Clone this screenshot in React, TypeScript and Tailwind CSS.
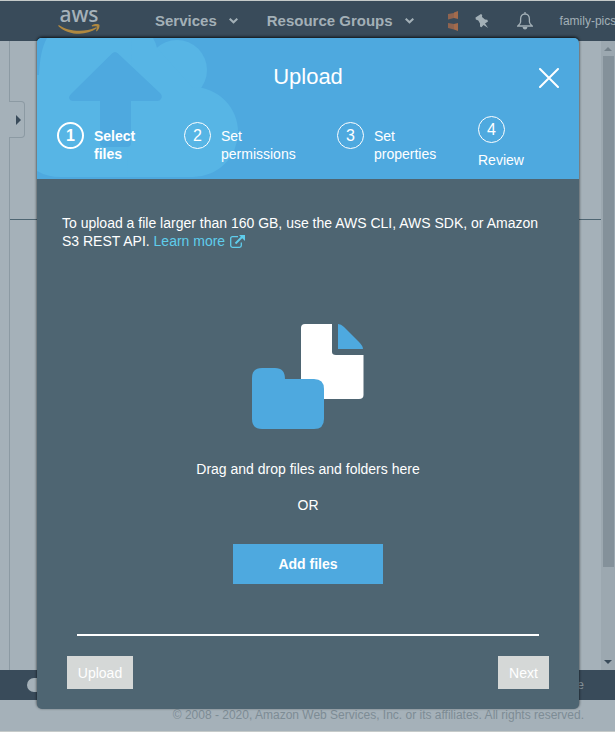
import React from "react";

function Chevron() {
  return (
    <svg width="9" height="6" viewBox="0 0 9 6" fill="none" stroke="#a3b0b7" strokeWidth="2" aria-hidden="true">
      <path d="M0.7 0.7 4.5 4.3 8.3 0.7" />
    </svg>
  );
}

function AwsLogo() {
  return (
    <a href="#home" aria-label="AWS home" className="flex h-full w-[42px] flex-col items-center">
      <span className="pt-[3px] font-['Noto_Sans',sans-serif] text-[21px] leading-5 font-medium text-[#a5b1b9]">aws</span>
      <svg width="42" height="10" viewBox="0 0 42 10" aria-hidden="true" className="block">
        <path d="M1.200 1.200C11 8 27 8.500 37.500 3.500C38.800 2.900 39.400 3.700 38.400 4.600C28.500 12 10.500 11.500 .7 2.400C0 1.600.4.800 1.200 1.200Z" fill="#b0883f" />
        <path d="M34 1.200C36-.3 40.800-.3 41.400.8C41.900 2.500 40.800 5.600 38.900 7.200C38.300 7.600 37.900 7.200 38.200 6.500C39 4.500 39.400 3.200 38.900 2.700C38.300 2.200 36.200 2.300 34.400 2.500C33.700 2.500 33.500 1.700 34 1.200Z" fill="#b0883f" />
      </svg>
    </a>
  );
}

function TopBar() {
  return (
    <header className="flex h-[41px] items-center overflow-hidden border-t border-[#c5cac9] bg-[#394b5a] pl-[58px] text-[#a3b0b7]">
      <AwsLogo />
      <nav className="ml-[55px] flex shrink-0 items-center gap-[29px] text-[15px] font-bold">
        <button className="flex items-center gap-3">Services <Chevron /></button>
        <button className="flex items-center gap-3">Resource Groups <Chevron /></button>
      </nav>
      <svg width="10" height="20" viewBox="0 0 10 20" className="ml-[34px] shrink-0" aria-hidden="true">
        <path d="M0 3 6 2V7L0 8.500ZM0 12 6 13V18.500L0 17Z" fill="#8f6450" />
        <path d="M6 1.500 10 0V8L6 7ZM6 13 10 12V20L6 18.500Z" fill="#a36b4c" />
      </svg>
      <button aria-label="Pin" className="ml-[17px] shrink-0">
        <svg width="14" height="15" viewBox="0 0 14 15" fill="#a3b0b7">
          <path d="M6 0 7.200 1 7 3 10 5.500 12.300 5.700 13 7.500 10 9.500 13.200 14 8.500 11 6.500 13.300 5 12.500 5 9.500 3.300 6.500.8 5.500.5 3.500Z" />
        </svg>
      </button>
      <button aria-label="Notifications" className="ml-7 shrink-0">
        <svg width="16" height="18" viewBox="0 0 16 18" fill="none" stroke="#a3b0b7" strokeWidth="1.300">
          <path d="M8 0V2M8 2C5 2 3.600 4 3.600 7V10C3.600 11.500 2.500 12.500.8 14H15.200C13.500 12.500 12.400 11.500 12.400 10V7C12.400 4 11 2 8 2Z" />
          <path d="M5.500 15H10.500Q10 17.500 8 17.500T5.500 15Z" fill="#a3b0b7" stroke="none" />
        </svg>
      </button>
      <button className="ml-[27px] shrink-0 text-xs">family-pics</button>
    </header>
  );
}

function Backdrop() {
  return (
    <div className="flex min-h-screen flex-col bg-[#a5b1b9]">
      <TopBar />
      <main className="flex grow">
        <div className="w-[10px] border-r border-[#8c9aa3]" />
        <div className="grow">
          <div className="h-[179px] border-b border-[#4e6572] pt-[60px]">
            <button aria-label="Expand side panel" className="-ml-px flex h-[37px] w-4 items-center justify-center rounded-r border border-l-0 border-[#8c9aa3] bg-[#a5b1b9]">
              <span className="ml-1 border-y-5 border-l-5 border-y-transparent border-l-[#394b5a]" />
            </button>
          </div>
        </div>
        <div className="flex w-[14px] flex-col items-center justify-between bg-[#9ca8b0] py-[6px]">
          <span className="border-x-4 border-b-4 border-x-transparent border-b-[#738089]" />
          <span className="mt-[5px] mb-auto h-[511px] w-[11px] bg-[#84919a]" />
          <span className="border-x-4 border-t-4 border-x-transparent border-t-[#394b5a]" />
        </div>
      </main>
      <div className="flex h-[30px] items-center justify-between bg-[#394b5a] pr-[31px] pl-[27px] text-xs text-[#84929b]">
        <span className="h-[14px] w-[18px] rounded-full bg-[#a5b1b9]" />
        <a href="#terms">Use</a>
      </div>
      <footer className="h-8 border-b border-[#c5cac9] pr-[31px] text-right text-xs leading-[30px] text-[#7d8c95]">
        © 2008 - 2020, Amazon Web Services, Inc. or its affiliates. All rights reserved.
      </footer>
    </div>
  );
}

function CloudArt() {
  return (
    <svg className="absolute top-0 left-0" width="202" height="141" viewBox="0 0 202 141" aria-hidden="true">
      <g fill="#57b5e5">
        <path d="M0 0H110V139H24Q10 139 0 133Z" />
        <circle cx="140" cy="32" r="30" />
        <circle cx="156" cy="94" r="45" />
        <path d="M95 0H116Q119 5 120 10L156 50V139H90Z" />
      </g>
      <path d="M0 0H10Q3 12 2 37H0Z" fill="#4ea9df" />
      <path d="M75 15.500Q78 12.500 81 15.500L123 55Q126 58 124 61Q123 63 120 63H94V105Q94 109 90 109H67Q63 109 63 105V63H36Q33 63 32 60Q32 58 34 56Z" fill="#4ea9df" />
    </svg>
  );
}

function StepCircle({ n, active }: { n: number; active?: boolean }) {
  return (
    <span className={`flex size-[27px] shrink-0 items-center justify-center rounded-full border-white pt-px text-base ${active ? "border-2 font-bold" : "border"}`}>
      {n}
    </span>
  );
}

function Step({ n, first, second, active }: { n: number; first: string; second: string; active?: boolean }) {
  return (
    <li className={`flex gap-[10px] ${active ? "font-bold" : ""}`}>
      <span className="pt-[6px]"><StepCircle n={n} active={active} /></span>
      <span className="pt-[11px]">{first}<br />{second}</span>
    </li>
  );
}

function FilesArt() {
  return (
    <svg width="112" height="106" viewBox="0 0 112 106" className="mx-auto block" aria-hidden="true">
      <path d="M53 0H80V28Q80 31 84 31H111.500V71Q111.500 75 107 75H53Q49 75 49 71V4Q49 0 53 0Z" fill="#fff" />
      <path d="M86 0Q89 0 92 3L107 18Q111 22 111 25H86Z" fill="#4ea9df" />
      <path d="M10 44H23Q33 44 33 55H62Q72 55 72 65V95Q72 105 62 105H10Q0 105 0 95V54Q0 44 10 44Z" fill="#4ea9df" />
    </svg>
  );
}

function UploadDialog() {
  return (
    <section role="dialog" aria-labelledby="dialog-title" className="w-full overflow-hidden rounded-[5px] bg-[#4e6572] text-sm leading-[18px] text-white shadow-[0_-1px_3px_0_rgba(0,0,0,0.8)]">
      <header className="relative h-[141px] bg-[#4ea9df]">
        <CloudArt />
        <div className="relative">
          <div className="grid grid-cols-[1fr_auto_1fr] items-center pt-6 pr-5">
            <span />
            <h1 id="dialog-title" className="pl-5 text-[22px] leading-[30px]">Upload</h1>
            <button aria-label="Close" className="justify-self-end pt-[2px]">
              <svg width="20" height="20" viewBox="0 0 20 20" stroke="#fff" strokeWidth="2" strokeLinecap="round">
                <path d="M1 1 19 19M19 1 1 19" />
              </svg>
            </button>
          </div>
          <ol className="grid grid-cols-[127fr_153fr_141fr_81fr] px-5 pt-6">
            <Step n={1} first="Select" second="files" active />
            <Step n={2} first="Set" second="permissions" />
            <Step n={3} first="Set" second="properties" />
            <li className="flex flex-col gap-2">
              <StepCircle n={4} />
              <span>Review</span>
            </li>
          </ol>
        </div>
      </header>
      <div className="px-[25px] pt-[35px]">
        <p>
          To upload a file larger than 160 GB, use the AWS CLI, AWS SDK, or Amazon S3 REST API.{" "}
          <a href="#learn-more" className="text-[#5fcdec]">
            Learn more
            <svg width="15" height="13" viewBox="0 0 15 13" fill="none" stroke="currentColor" strokeWidth="1.300" className="ml-[5px] inline-block align-[-2px]" aria-hidden="true">
              <path d="M8 1.700H2.500Q.7 1.700.7 3.500V10.500Q.7 12.300 2.500 12.300H9.500Q11.300 12.300 11.300 10.500V7.500" />
              <path d="M5.500 8.500 12 2" strokeWidth="2" />
              <path d="M9 0H15V6Z" fill="currentColor" stroke="none" />
            </svg>
          </a>
        </p>
        <div className="pt-[74px] text-center">
          <FilesArt />
          <p className="mt-[30px]">Drag and drop files and folders here</p>
          <p className="mt-[18px]">OR</p>
          <button className="mt-[30px] h-10 w-[150px] bg-[#4ea9df] font-bold">Add files</button>
        </div>
      </div>
      <hr className="mx-10 mt-[50px] border-t-2 border-white" />
      <footer className="flex justify-between px-[30px] py-5">
        <button disabled className="h-[33px] w-[66px] bg-[#d5d8d7]">Upload</button>
        <button disabled className="h-[33px] w-[51px] bg-[#d5d8d7]">Next</button>
      </footer>
    </section>
  );
}

export default function App() {
  return (
    <div className="relative overflow-hidden font-['Liberation_Sans',Arial,sans-serif]">
      <Backdrop />
      <div className="absolute inset-x-0 top-0 pt-[38px] pr-9 pl-[37px]">
        <UploadDialog />
      </div>
    </div>
  );
}
